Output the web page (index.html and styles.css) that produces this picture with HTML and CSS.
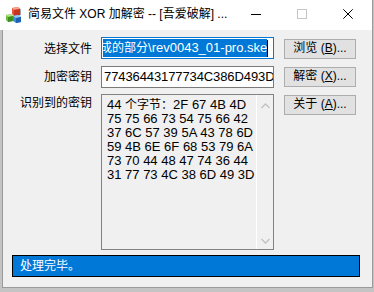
FILE: index.html
```html
<!DOCTYPE html>
<html lang="zh-CN">
<head>
<meta charset="utf-8">
<title>简易文件 XOR 加解密</title>
<link rel="stylesheet" href="styles.css">
</head>
<body>
<div class="window">
  <div class="titlebar">
    <svg class="app-icon" width="17" height="17" viewBox="0 0 17 17">
      <polygon points="11,3 15,2 16,4 16,9 12,10 11,8" fill="#9aa2a8"/>
      <polygon points="7,2 13,1 15,3 15,9 9,10 7,8" fill="#e8553a"/>
      <polygon points="7,2 13,1 15,3 9,4" fill="#f7a08a"/>
      <polygon points="9,4 15,3 15,9 9,10" fill="#c8331f"/>
      <polygon points="1,9 6,8 8,10 8,15 3,16 1,14" fill="#6bbd3a"/>
      <polygon points="1,9 6,8 8,10 3,11" fill="#b6e28c"/>
      <polygon points="3,11 8,10 8,15 3,16" fill="#3f8f1f"/>
      <polygon points="8,10 13,9 16,11 16,16 11,17 8,15" fill="#3a8ee0"/>
      <polygon points="8,10 13,9 16,11 11,12" fill="#9ccaf5"/>
      <polygon points="11,12 16,11 16,16 11,17" fill="#1d62b0"/>
    </svg>
    <span class="title">简易文件 XOR 加解密 -- [吾爱破解] ...</span>
    <div class="caption">
      <span class="cap"><svg width="10" height="10" viewBox="0 0 10 10"><line x1="0" y1="5.5" x2="10" y2="5.5" stroke="#000" stroke-width="1"/></svg></span>
      <span class="cap"><svg width="10" height="10" viewBox="0 0 10 10"><rect x="0.5" y="0.5" width="9" height="9" fill="none" stroke="#c6c6c6" stroke-width="1"/></svg></span>
      <span class="cap"><svg width="10" height="10" viewBox="0 0 10 10"><path d="M0.3 0.3 L9.7 9.7 M9.7 0.3 L0.3 9.7" stroke="#000" stroke-width="1"/></svg></span>
    </div>
  </div>
  <div class="client">
    <div class="form">
      <div class="lbl">选择文件</div>
      <div class="edit focused">
        <div class="clip"><span class="sel"><span class="cjk">成的部分</span>\rev0043_01-pro.ske</span><span class="caret"></span></div>
      </div>
      <div class="btn btn-first">浏览 (<u>B</u>)...</div>

      <div class="lbl">加密密钥</div>
      <div class="edit"><div class="clip key">77436443177734C386D493D</div></div>
      <div class="btn">解密 (<u>X</u>)...</div>

      <div class="lbl lbl-top">识别到的密钥</div>
      <div class="memo">
        <div class="memo-text">
          <div class="line">44 <span class="cjk">个字节：</span>2F 67 4B 4D</div>
          <div class="line">75 75 66 73 54 75 66 42</div>
          <div class="line">37 6C 57 39 5A 43 78 6D</div>
          <div class="line">59 4B 6E 6F 68 53 79 6A</div>
          <div class="line">73 70 44 48 47 74 36 44</div>
          <div class="line">31 77 73 4C 38 6D 49 3D</div>
        </div>
        <div class="vscroll">
          <svg width="9" height="6" viewBox="0 0 9 6"><path d="M0.5 5 L4.5 1 L8.5 5" fill="none" stroke="#c2c2c2" stroke-width="1.3"/></svg>
          <svg width="9" height="6" viewBox="0 0 9 6"><path d="M0.5 1 L4.5 5 L8.5 1" fill="none" stroke="#c2c2c2" stroke-width="1.3"/></svg>
        </div>
      </div>
      <div class="btn">关于 (<u>A</u>)...</div>
    </div>
    <div class="status">处理完毕。</div>
  </div>
</div>
</body>
</html>
```

FILE: styles.css
```css
* {
  box-sizing: border-box;
}

html, body {
  margin: 0;
  padding: 0;
}

body {
  width: 374px;
  height: 292px;
  overflow: hidden;
  background: #c4c4c4;
  font-family: "Liberation Sans", "Noto Sans CJK SC", sans-serif;
  font-size: 12px;
  color: #000;
}

.window {
  width: 373px;
}

.titlebar {
  height: 30px;
  width: 373px;
  background: #fff;
  border-right: 1px solid #9a9a9a;
  display: flex;
  align-items: center;
}

.app-icon {
  margin-left: 5px;
  margin-bottom: 1px;
  flex: none;
}

.title {
  margin-left: 6px;
  line-height: 16px;
  margin-bottom: 2px;
  white-space: nowrap;
}

.caption {
  margin-left: auto;
  display: flex;
  height: 30px;
  margin-right: 1px;
}

.cap {
  width: 46px;
  height: 30px;
  display: flex;
  align-items: center;
  justify-content: center;
  padding-bottom: 2px;
}

.client {
  margin-left: 2px;
  width: 371px;
  height: 258px;
  background: #f0f0f0;
  border-left: 1px solid #9a9a9a;
  border-right: 1px solid #9a9a9a;
  border-bottom: 1px solid #9a9a9a;
  padding-top: 7px;
}

.form {
  display: grid;
  grid-template-columns: 89px 173px 72px;
  grid-template-rows: 23px 22px 156px;
  column-gap: 9px;
  row-gap: 6px;
}

.form > :nth-child(3n) {
  margin-left: 1px;
}

.lbl {
  text-align: right;
  align-self: center;
  line-height: 16px;
  white-space: nowrap;
}

.lbl-top {
  align-self: start;
  padding-top: 1px;
}

.edit {
  height: 22px;
  background: #fff;
  border: 1px solid #7a7a7a;
  padding-left: 1px;
  display: flex;
  align-items: center;
  font-size: 13px;
  overflow: hidden;
}

.edit.focused {
  border-color: #0078d7;
}

.clip {
  overflow: hidden;
  white-space: nowrap;
  display: flex;
  align-items: center;
  line-height: 18px;
}

.key {
  padding-left: 1px;
  letter-spacing: -0.1px;
}

.sel {
  background: #0078d7;
  color: #fff;
  margin-left: -3px;
  line-height: 18px;
  height: 18px;
  display: inline-block;
}

.caret {
  display: inline-block;
  width: 1px;
  height: 17px;
  background: #000;
  flex: none;
}

.cjk {
  font-size: 12px;
}

.btn {
  height: 20px;
  width: 72px;
  align-self: start;
  margin-top: 1px;
  background: #e1e1e1;
  border: 1px solid #adadad;
  text-align: center;
  line-height: 17px;
  white-space: nowrap;
}

.btn-first {
  margin-top: 2px;
}

.btn u {
  text-decoration: underline;
  text-underline-offset: 1px;
}

.memo {
  border: 1px solid #828282;
  background: #f0f0f0;
  display: flex;
}

.memo-text {
  flex: 1;
  padding: 3px 0 0 5px;
  font-size: 13px;
  line-height: 14px;
  overflow: hidden;
}

.line {
  white-space: nowrap;
  height: 14px;
}

.vscroll {
  width: 17px;
  flex: none;
  border-left: 1px solid #fff;
  display: flex;
  flex-direction: column;
  justify-content: space-between;
  align-items: center;
  padding: 8px 0 5px 0;
}

.status {
  margin-top: 5px;
  margin-left: 9px;
  width: 348px;
  height: 22px;
  background: #0078d7;
  border: 1px solid #000;
  color: #fff;
  padding-left: 7px;
  line-height: 20px;
  white-space: nowrap;
}
```
